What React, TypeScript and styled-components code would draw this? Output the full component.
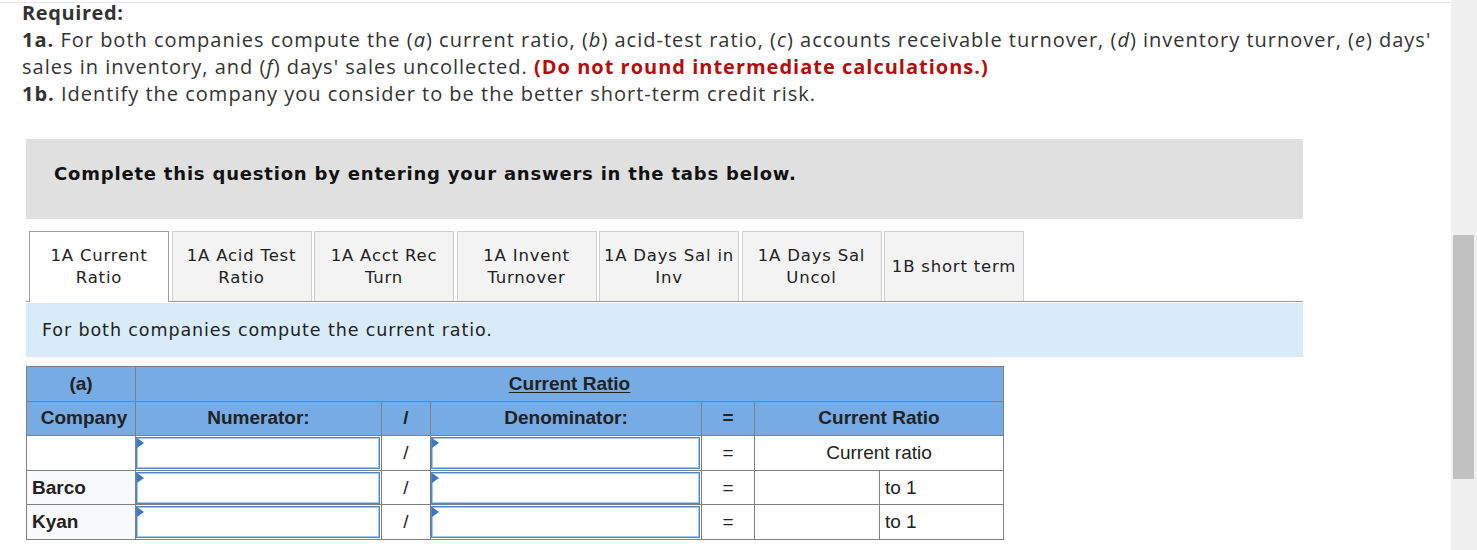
import styled, { createGlobalStyle } from 'styled-components';

const GlobalStyle = createGlobalStyle`
  html, body {
    margin: 0;
    padding: 0;
    background: #fff;
    overflow: hidden;
  }
`;

const Page = styled.div`
  display: flex;
  width: 1477px;
  height: 550px;
  overflow: hidden;
`;

const Main = styled.div`
  flex: 1;
  margin-top: 2px;
  border-top: 1px solid #e8e8e8;
`;

const ScrollTrack = styled.div`
  width: 26px;
  background: #f0f0f0;
  padding-top: 235px;
  box-sizing: border-box;
`;

const ScrollThumb = styled.div`
  width: 21px;
  height: 244px;
  margin-left: 2px;
  background: #c1c1c1;
`;

const Prompt = styled.div`
  margin-top: -4px;
  padding-left: 22px;
  font-family: "Open Sans", sans-serif;
  font-size: 20px;
  letter-spacing: 1px;
  line-height: 27px;
  color: #333;
  white-space: nowrap;
`;

const Heading = styled.div`
  font-weight: 700;
  letter-spacing: 0.6px;
`;

const Part = styled.b`
  font-weight: 700;
`;

const Warning = styled.b`
  color: #b30d0d;
  font-weight: 700;
`;

const Content = styled.div`
  width: 1277px;
  margin: 32px 0 0 26px;
`;

const Banner = styled.div`
  height: 80px;
  background: #e0e0e0;
  padding: 0 0 12px 28px;
  display: flex;
  align-items: center;
  font-family: "DejaVu Sans", Verdana, sans-serif;
  font-weight: 700;
  font-size: 18px;
  letter-spacing: 0.8px;
  color: #111;
  box-sizing: border-box;
`;

const Tabs = styled.div`
  display: flex;
  gap: 2.5px;
  margin-top: 12px;
  padding-left: 3px;
  border-bottom: 1px solid #999;
`;

const Tab = styled.div<{ $active?: boolean }>`
  width: 140px;
  box-sizing: border-box;
  display: flex;
  align-items: center;
  justify-content: center;
  text-align: center;
  font-family: "DejaVu Sans", Verdana, sans-serif;
  font-size: 16.5px;
  letter-spacing: 0.8px;
  line-height: 22px;
  color: #222;
  white-space: nowrap;
  background: ${(p) => (p.$active ? '#fff' : '#f3f3f3')};
  border: 1px solid ${(p) => (p.$active ? '#a0a0a0' : '#cfcfcf')};
  border-bottom: none;
  margin-bottom: ${(p) => (p.$active ? '-1px' : '0')};
  height: ${(p) => (p.$active ? '71px' : '70px')};
`;

const Instruction = styled.div`
  margin-top: 1px;
  height: 54px;
  background: #d9ebf9;
  display: flex;
  align-items: center;
  padding-left: 16px;
  font-family: "DejaVu Sans", Verdana, sans-serif;
  font-size: 17.5px;
  letter-spacing: 0.9px;
  color: #222;
`;

const Grid = styled.table`
  margin-top: 9px;
  border-collapse: collapse;
  table-layout: fixed;
  width: 977px;
  font-family: "Liberation Sans", Arial, sans-serif;
  font-size: 19px;
  color: #222;
`;

const Head = styled.th<{ $underline?: boolean; $pad?: boolean }>`
  background: #77abe3;
  border: 1px solid #808080;
  height: 33.6px;
  padding: 0 0 0 ${(p) => (p.$pad ? '6px' : '0')};
  font-weight: 700;
  text-align: center;
  text-decoration: ${(p) => (p.$underline ? 'underline' : 'none')};
  text-underline-offset: 2px;
`;

const Cell = styled.td<{ $align?: 'left' | 'center'; $bold?: boolean; $tint?: boolean }>`
  border: 1px solid #808080;
  height: 33.6px;
  padding: 0 ${(p) => (p.$align === 'left' ? '5px' : '0')};
  text-align: ${(p) => p.$align ?? 'center'};
  font-weight: ${(p) => (p.$bold ? 700 : 400)};
  background: ${(p) => (p.$tint ? '#f8f9fb' : '#fff')};
`;

const InputCell = styled.td`
  border: 1px solid #808080;
  padding: 0;
  height: 33.6px;
`;

const Field = styled.div`
  position: relative;
  height: 32px;
  margin: 0 1px 0 0;
  border: 1px solid #4f86c6;
  box-shadow: inset 0 0 0 1px #a8c6ea;
  background: #fff;
  box-sizing: border-box;
`;

const Marker = styled.span`
  position: absolute;
  left: 0;
  top: 0;
  width: 0;
  height: 0;
  border-top: 5px solid transparent;
  border-bottom: 5px solid transparent;
  border-left: 7px solid #3b78c4;
`;

const tabs = [
  ['1A Current', 'Ratio'],
  ['1A Acid Test', 'Ratio'],
  ['1A Acct Rec', 'Turn'],
  ['1A Invent', 'Turnover'],
  ['1A Days Sal in', 'Inv'],
  ['1A Days Sal', 'Uncol'],
  ['1B short term'],
];

const InputBox = () => (
  <InputCell>
    <Field>
      <Marker />
    </Field>
  </InputCell>
);

export default function App() {
  return (
    <>
      <GlobalStyle />
      <Page>
        <Main>
          <Prompt>
            <Heading>Required:</Heading>
            <div>
              <Part>1a.</Part> For both companies compute the (<i>a</i>) current ratio, (<i>b</i>) acid-test ratio, (<i>c</i>) accounts receivable turnover, (<i>d</i>) inventory turnover, (<i>e</i>) days'
              <br />
              sales in inventory, and (<i>f</i>) days' sales uncollected.{' '}
              <Warning>(Do not round intermediate calculations.)</Warning>
            </div>
            <div>
              <Part>1b.</Part> Identify the company you consider to be the better short-term credit risk.
            </div>
          </Prompt>

          <Content>
            <Banner>Complete this question by entering your answers in the tabs below.</Banner>

            <Tabs>
              {tabs.map((lines, i) => (
                <Tab key={i} $active={i === 0}>
                  <div>
                    {lines.map((l) => (
                      <div key={l}>{l}</div>
                    ))}
                  </div>
                </Tab>
              ))}
            </Tabs>

            <Instruction>For both companies compute the current ratio.</Instruction>

            <Grid>
              <colgroup>
                <col style={{ width: 109 }} />
                <col style={{ width: 246 }} />
                <col style={{ width: 49 }} />
                <col style={{ width: 271 }} />
                <col style={{ width: 53 }} />
                <col style={{ width: 125 }} />
                <col style={{ width: 124 }} />
              </colgroup>
              <thead>
                <tr>
                  <Head>(a)</Head>
                  <Head colSpan={6} $underline>
                    Current Ratio
                  </Head>
                </tr>
                <tr>
                  <Head $pad>Company</Head>
                  <Head>Numerator:</Head>
                  <Head>/</Head>
                  <Head>Denominator:</Head>
                  <Head>=</Head>
                  <Head colSpan={2}>Current Ratio</Head>
                </tr>
              </thead>
              <tbody>
                <tr>
                  <Cell />
                  <InputBox />
                  <Cell>/</Cell>
                  <InputBox />
                  <Cell>=</Cell>
                  <Cell colSpan={2}>Current ratio</Cell>
                </tr>
                {['Barco', 'Kyan'].map((name) => (
                  <tr key={name}>
                    <Cell $align="left" $bold $tint>
                      {name}
                    </Cell>
                    <InputBox />
                    <Cell>/</Cell>
                    <InputBox />
                    <Cell>=</Cell>
                    <Cell />
                    <Cell $align="left">to 1</Cell>
                  </tr>
                ))}
              </tbody>
            </Grid>
          </Content>
        </Main>
        <ScrollTrack>
          <ScrollThumb />
        </ScrollTrack>
      </Page>
    </>
  );
}
